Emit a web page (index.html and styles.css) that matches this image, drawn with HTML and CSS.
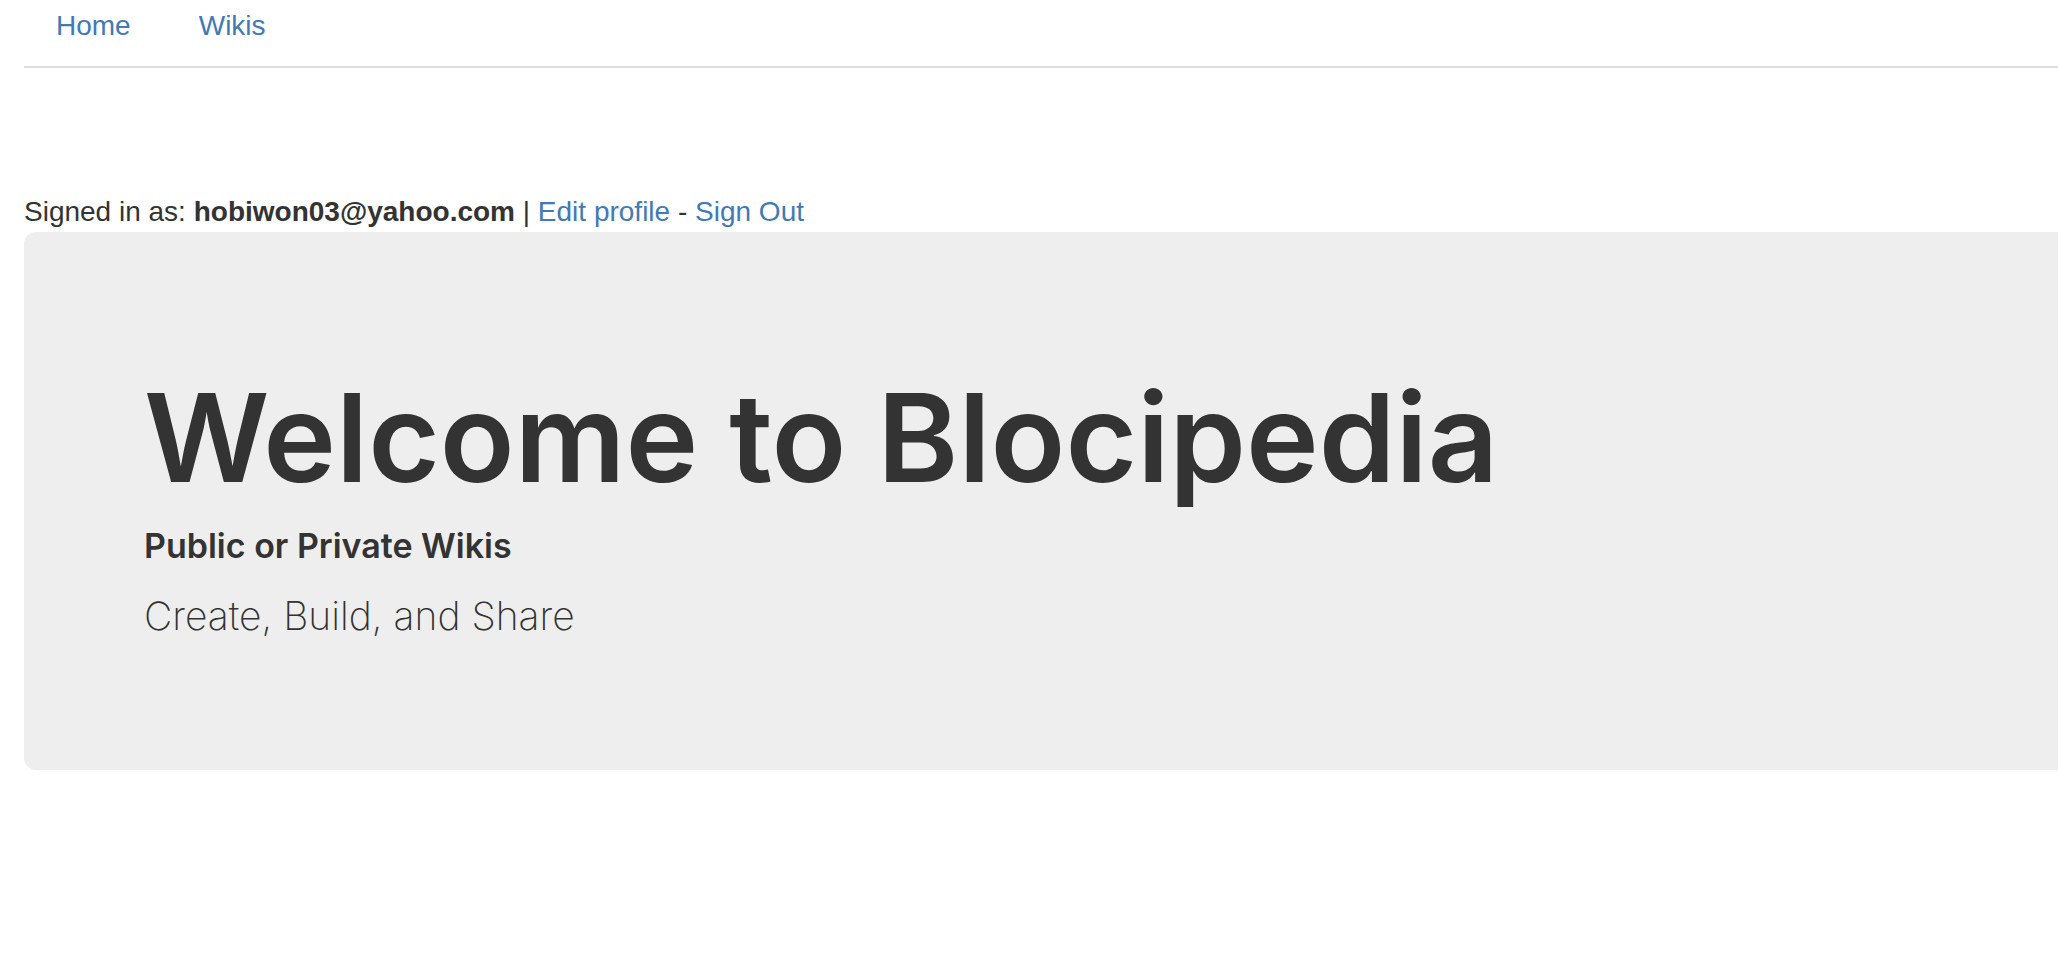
FILE: index.html
```html
<!DOCTYPE html>
<html lang="en">
<head>
<meta charset="utf-8">
<title>Blocipedia</title>
<link rel="stylesheet" href="styles.css">
</head>
<body>
<nav class="tabs">
<a href="#">Home</a>
<a href="#">Wikis</a>
</nav>
<p class="user-info">Signed in as: <strong>hobiwon03@yahoo.com</strong> | <a href="#">Edit profile</a> - <a href="#">Sign Out</a></p>
<main class="jumbotron">
<h1>Welcome to Blocipedia</h1>
<h2>Public or Private Wikis</h2>
<p>Create, Build, and Share</p>
</main>
</body>
</html>
```
FILE: styles.css
```css
* { box-sizing: border-box; }
body {
  margin: 0;
  padding-left: 24px;
  font-family: "Liberation Sans", Arial, sans-serif;
  font-size: 28px;
  line-height: 40px;
  color: #333;
  background: #fff;
}
a { color: #427ab5; text-decoration: none; }
.tabs {
  display: flex;
  gap: 4px;
  height: 68px;
  border-bottom: 2px solid #ddd;
}
.tabs a { padding: 6px 32px; }
.user-info { margin: 124px 0 0; }
.jumbotron {
  padding: 136px 120px 124px;
  border-radius: 12px 0 0 12px;
  background: #eee;
  font-family: Inter, "Liberation Sans", sans-serif;
}
h1, h2, p { margin: 0; }
h1 { font-size: 123px; line-height: 140px; font-weight: 600; }
h2 { margin-top: 18px; font-size: 34px; line-height: 40px; font-weight: 600; }
.jumbotron p { margin-top: 20px; font-size: 39px; line-height: 60px; font-weight: 200; }
```
